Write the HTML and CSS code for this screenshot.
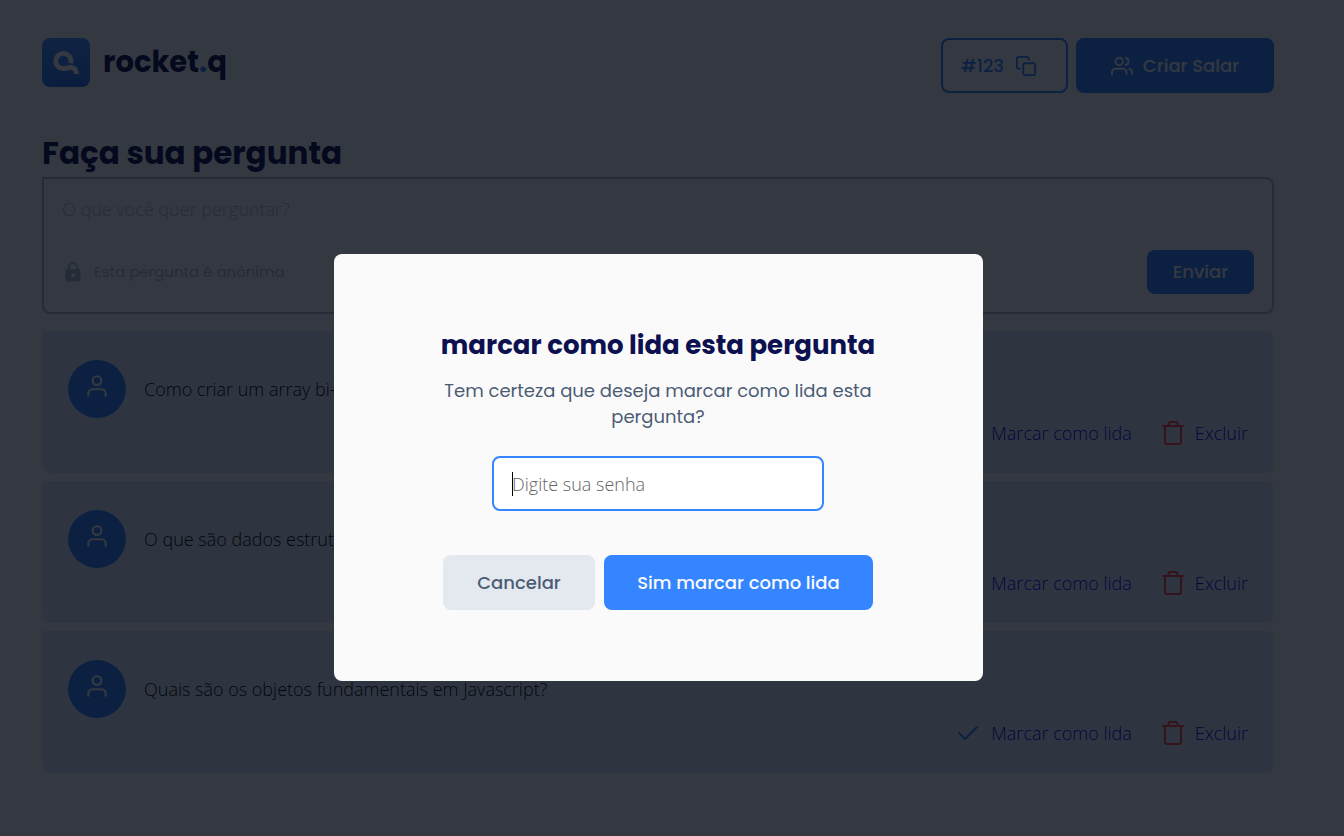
FILE: index.html
```html
<!DOCTYPE html>
<html lang="pt-BR">
<head>
<meta charset="utf-8">
<meta name="viewport" content="width=device-width, initial-scale=1">
<title>rocket.q</title>
<link rel="stylesheet" href="styles.css">
</head>
<body>
<svg class="sprite" aria-hidden="true">
  <symbol id="user" viewBox="0 0 24 24"><path d="M20 21v-2a4 4 0 0 0-4-4H8a4 4 0 0 0-4 4v2"/><circle cx="12" cy="7" r="4"/></symbol>
  <symbol id="check" viewBox="0 0 24 24"><path d="M21 6 9 18l-6-6"/></symbol>
  <symbol id="trash" viewBox="0 0 22 24"><path d="M1 5h20M19 5v16a2 2 0 0 1-2 2H5a2 2 0 0 1-2-2V5M6.500 5V3a2 2 0 0 1 2-2h5a2 2 0 0 1 2 2v2"/></symbol>
</svg>

<div class="page">
  <header class="header">
    <a class="brand" href="#">
      <svg class="brand-mark" viewBox="0 0 48 49" aria-hidden="true">
        <defs><linearGradient id="mark" x1="0" y1="0" x2="0" y2="1"><stop offset="0" stop-color="#4a90ff"/><stop offset="1" stop-color="#2c74ef"/></linearGradient></defs>
        <rect width="48" height="49" rx="8" fill="url(#mark)"/>
        <path d="M28.600 25.300A7.600 7.600 0 1 0 21.300 30.600C25 30.600 26.500 28.900 29.500 29.300C32.500 29.800 34.300 32 34.600 36" fill="none" stroke="#fafafa" stroke-width="4.800"/>
      </svg>
      <span class="brand-name">rocket<span class="brand-dot">.</span>q</span>
    </a>
    <div class="header-actions">
      <button class="button outlined" type="button">#123
        <svg class="icon" viewBox="0 0 24 24" aria-hidden="true"><rect x="9" y="9" width="13" height="13" rx="2"/><path d="M5 15H4a2 2 0 0 1-2-2V4a2 2 0 0 1 2-2h9a2 2 0 0 1 2 2v1"/></svg>
      </button>
      <button class="button create" type="button">
        <svg class="icon" viewBox="0 0 24 24" aria-hidden="true"><path d="M17 21v-2a4 4 0 0 0-4-4H5a4 4 0 0 0-4 4v2"/><circle cx="9" cy="7" r="4"/><path d="M23 21v-2a4 4 0 0 0-3-3.870M16 3.130a4 4 0 0 1 0 7.750"/></svg>
        Criar Salar
      </button>
    </div>
  </header>

  <main>
    <h1 class="title"><label for="question">Faça sua pergunta</label></h1>
    <form class="ask">
      <textarea class="ask-text" id="question" rows="2" placeholder="O que você quer perguntar?"></textarea>
      <div class="ask-footer">
        <p class="note">
          <svg class="lock" viewBox="0 0 16 20" aria-hidden="true"><path d="M4 8V5a4 4 0 0 1 8 0v3" fill="none" stroke="currentColor" stroke-width="2"/><path fill="currentColor" fill-rule="evenodd" d="M2 7h12a1.500 1.500 0 0 1 1.500 1.500v9.500a1.500 1.500 0 0 1-1.500 1.500H2A1.500 1.500 0 0 1 .5 18V8.500A1.500 1.500 0 0 1 2 7Zm6 4.500a2 2 0 1 0 0 4 2 2 0 0 0 0-4Z"/></svg>
          Esta pergunta é anônima
        </p>
        <button class="button send" type="button">Enviar</button>
      </div>
    </form>

    <section class="questions" aria-label="Perguntas">
      <article class="question">
        <div class="question-body"><span class="avatar"><svg class="icon" aria-hidden="true"><use href="#user"/></svg></span><p>Como criar um array bi-dimensional?</p></div>
        <div class="question-actions">
          <a href="#"><svg class="icon check" aria-hidden="true"><use href="#check"/></svg>Marcar como lida</a>
          <a href="#"><svg class="icon trash" aria-hidden="true"><use href="#trash"/></svg>Excluir</a>
        </div>
      </article>
      <article class="question">
        <div class="question-body"><span class="avatar"><svg class="icon" aria-hidden="true"><use href="#user"/></svg></span><p>O que são dados estruturados?</p></div>
        <div class="question-actions">
          <a href="#"><svg class="icon check" aria-hidden="true"><use href="#check"/></svg>Marcar como lida</a>
          <a href="#"><svg class="icon trash" aria-hidden="true"><use href="#trash"/></svg>Excluir</a>
        </div>
      </article>
      <article class="question">
        <div class="question-body"><span class="avatar"><svg class="icon" aria-hidden="true"><use href="#user"/></svg></span><p>Quais são os objetos fundamentais em Javascript?</p></div>
        <div class="question-actions">
          <a href="#"><svg class="icon check" aria-hidden="true"><use href="#check"/></svg>Marcar como lida</a>
          <a href="#"><svg class="icon trash" aria-hidden="true"><use href="#trash"/></svg>Excluir</a>
        </div>
      </article>
    </section>
  </main>
</div>

<div class="overlay">
  <div class="modal" role="dialog" aria-modal="true" aria-labelledby="modal-title">
    <h2 class="modal-title" id="modal-title">marcar como lida esta pergunta</h2>
    <p class="modal-text">Tem certeza que deseja marcar como lida esta pergunta?</p>
    <form class="modal-form">
      <input class="password" type="password" aria-label="Senha" placeholder="Digite sua senha">
      <div class="modal-actions">
        <button class="button cancel" type="button">Cancelar</button>
        <button class="button confirm" type="button">Sim marcar como lida</button>
      </div>
    </form>
  </div>
</div>
</body>
</html>
```
FILE: styles.css
```css
:root {
  --blue: #3485ff;
  --navy: #0d1150;
  --slate: #4b5c74;
  --muted: #afbed2;
  --paper: #fafafa;
  --heading-font: Poppins, Inter, sans-serif;
  --body-font: "Open Sans", sans-serif;
}

* { box-sizing: border-box; margin: 0; }

body {
  background: var(--paper);
  font: 300 18px/24px var(--body-font);
  color: #000;
}

button, input, textarea { font: inherit; }
a { color: #0000ee; text-decoration: none; }

.sprite { position: absolute; width: 0; height: 0; }

.icon {
  width: 24px;
  height: 24px;
  flex: none;
  fill: none;
  stroke: currentColor;
  stroke-width: 2;
  stroke-linecap: round;
  stroke-linejoin: round;
}

.page { padding: 38px 70px 60px 42px; }

.header {
  display: flex;
  justify-content: space-between;
  align-items: flex-start;
}

.brand { display: flex; gap: 13px; color: var(--navy); }
.brand-mark { width: 48px; height: 49px; }
.brand-name { font: 700 29px/48px var(--heading-font); }
.brand-dot { color: var(--blue); }
.header-actions { display: flex; gap: 8px; }

.button {
  display: flex;
  align-items: center;
  justify-content: center;
  height: 55px;
  padding: 0 16px;
  border: 0;
  border-radius: 8px;
  background: var(--blue);
  color: var(--paper);
  font: 500 18px/24px var(--heading-font);
}

.button .icon { width: 22px; height: 22px; }

.outlined {
  min-width: 127px;
  gap: 11px;
  padding: 0 28px 0 17px;
  border: 2px solid var(--blue);
  background: transparent;
  color: var(--blue);
}

.create { min-width: 198px; gap: 10px; }

.title {
  margin-top: 36px;
  color: var(--navy);
  font: 700 31px/48px var(--heading-font);
}

.ask {
  padding: 18px;
  border: 2px solid var(--muted);
  border-radius: 0 8px 8px 8px;
}

.ask-text {
  display: block;
  width: 100%;
  height: 53px;
  padding: 0;
  border: 0;
  outline: 0;
  resize: none;
  background: transparent;
}

.ask-text::placeholder { color: var(--muted); opacity: 1; }

.ask-footer {
  display: flex;
  align-items: center;
  justify-content: space-between;
}

.note {
  display: flex;
  align-items: center;
  gap: 13px;
  padding-left: 3px;
  color: var(--muted);
  font: 400 15px/24px var(--heading-font);
}

.lock { width: 16px; height: 20px; }
.send { height: 44px; min-width: 107px; }

.questions { display: grid; gap: 8px; margin-top: 17px; }

.question {
  padding: 29px 26px 28px;
  border-radius: 0 8px 8px 8px;
  background: #e1ebfa;
}

.question-body { display: flex; align-items: center; gap: 18px; }

.avatar {
  display: grid;
  justify-items: center;
  width: 58px;
  height: 58px;
  padding-top: 13px;
  border-radius: 50%;
  background: var(--blue);
  color: var(--paper);
}

.avatar .icon { width: 26px; height: 26px; }

.question-actions {
  display: flex;
  justify-content: flex-end;
  gap: 30px;
  margin-top: 3px;
}

.question-actions a { display: flex; align-items: center; gap: 11px; }
.check { color: var(--blue); }
.question-actions .trash { width: 22px; color: #ff4040; }

.overlay {
  position: fixed;
  inset: 0;
  display: grid;
  place-content: center;
  padding: 99px 28px 0 0;
  background: rgba(3, 7, 17, .8);
}

.modal {
  width: 649px;
  max-width: 100%;
  padding: 73px 24px 71px;
  border-radius: 8px;
  background: var(--paper);
  text-align: center;
}

.modal-title { color: var(--navy); font: 700 26px/36px var(--heading-font); }

.modal-text {
  max-width: 448px;
  margin: 15px auto 26px;
  color: var(--slate);
  font: 400 18px/26px var(--heading-font);
}

.modal-form { display: grid; gap: 44px; justify-items: center; }

.password {
  width: 332px;
  height: 55px;
  padding: 0 18px;
  border: 2px solid var(--blue);
  border-radius: 8px;
  outline: 0;
  background: #fff linear-gradient(#000, #000) 18px center / 1px 24px no-repeat;
}

.password::placeholder { color: #656565; }

.modal-actions { display: flex; gap: 9px; }
.cancel { min-width: 152px; background: #e4e9f0; color: var(--slate); }
.confirm { min-width: 269px; }
```
